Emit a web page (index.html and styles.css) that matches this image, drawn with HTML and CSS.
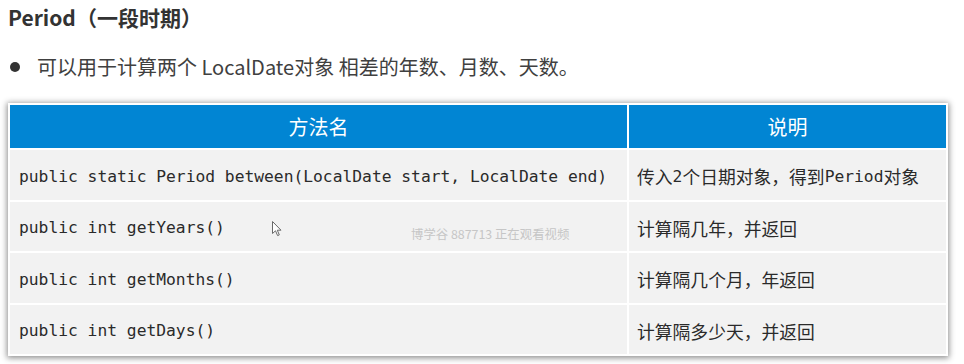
FILE: index.html
```html
<!DOCTYPE html>
<html lang="zh-CN">
<head>
<meta charset="utf-8">
<title>Period</title>
<link rel="stylesheet" href="styles.css">
</head>
<body>
<div class="page">
  <h1 class="title">Period（一段时期）</h1>
  <div class="bullet-line">
    <span class="dot"></span>
    <span class="bullet-text">可以用于计算两个 LocalDate对象 相差的年数、月数、天数。</span>
  </div>
  <div class="card">
    <div class="grid">
      <div class="th">方法名</div>
      <div class="th">说明</div>
      <div class="td code">public static Period between(LocalDate start, LocalDate end)</div>
      <div class="td desc">传入<span class="mono">2</span>个日期对象，得到<span class="mono">Period</span>对象</div>
      <div class="td code">public int getYears()</div>
      <div class="td desc">计算隔几年，并返回</div>
      <div class="td code">public int getMonths()</div>
      <div class="td desc">计算隔几个月，年返回</div>
      <div class="td code">public int getDays()</div>
      <div class="td desc">计算隔多少天，并返回</div>
    </div>
    <div class="watermark">博学谷 887713 正在观看视频</div>
    <svg class="cursor" width="10" height="16" viewBox="0 0 10 16">
      <path d="M0.5 0.5 L0.5 12.5 L3.5 9.8 L5.6 14.6 L7.3 13.9 L5.3 9.2 L9 9.2 Z" fill="#ffffff" stroke="#6a6a6a" stroke-width="1" stroke-linejoin="round"/>
    </svg>
  </div>
</div>
</body>
</html>
```

FILE: styles.css
```css
html, body {
  margin: 0;
  padding: 0;
  background: #ffffff;
}

.page {
  width: 964px;
  height: 364px;
  overflow: hidden;
  font-family: "Noto Sans CJK SC", "Noto Sans", sans-serif;
}

.title {
  margin: 0;
  padding: 2px 0 0 8px;
  font-size: 21px;
  line-height: 30px;
  font-weight: 700;
  color: #333333;
}

.bullet-line {
  display: flex;
  align-items: center;
  margin-top: 20px;
  padding-left: 10px;
  height: 30px;
}

.dot {
  width: 10px;
  height: 10px;
  border-radius: 50%;
  background: #333333;
  flex: none;
}

.bullet-text {
  margin-left: 17px;
  font-size: 20px;
  color: #404040;
  line-height: 30px;
}

.card {
  position: relative;
  margin: 21px 0 0 8px;
  width: 936px;
  padding: 2px;
  background: #ffffff;
  box-shadow: 0 1px 6px 1px rgba(0, 0, 0, 0.45);
}

.grid {
  display: grid;
  grid-template-columns: 617px 317px;
  grid-template-rows: 43px repeat(4, 49.5px);
  gap: 2px;
}

.th {
  background: #0185d3;
  color: #ffffff;
  font-size: 20px;
  display: flex;
  align-items: center;
  justify-content: center;
}

.td {
  background: #f2f2f2;
  color: #2a2a2a;
  display: flex;
  align-items: center;
  padding-top: 3px;
}

.code {
  padding-left: 9px;
  font-family: "DejaVu Sans Mono", monospace;
  font-size: 16.3px;
}

.desc {
  padding-left: 8px;
  font-size: 17.8px;
  font-family: "Noto Sans CJK SC", sans-serif;
}

.mono {
  font-family: "DejaVu Sans Mono", monospace;
  font-size: 16.3px;
}

.watermark {
  position: absolute;
  left: 403px;
  top: 122px;
  font-size: 12.4px;
  color: #c6c6c6;
  white-space: nowrap;
}

.cursor {
  position: absolute;
  left: 264px;
  top: 118px;
}
```
